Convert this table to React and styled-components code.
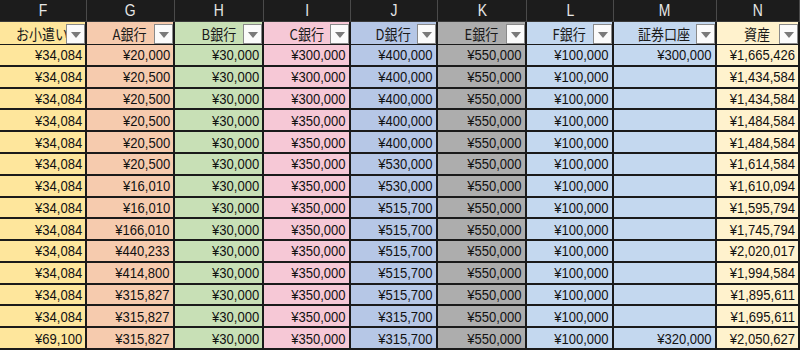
import styled, { createGlobalStyle } from "styled-components";

const GlobalStyle = createGlobalStyle`
  html, body {
    margin: 0;
    padding: 0;
    background: #ffffff;
  }
`;

const COLUMNS = [
  { key: "F", title: "お小遣い", bg: "#fee69c", width: 87 },
  { key: "G", title: "A銀行", bg: "#f6cbae", width: 88 },
  { key: "H", title: "B銀行", bg: "#c8e0b6", width: 89 },
  { key: "I", title: "C銀行", bg: "#f6c8d6", width: 87 },
  { key: "J", title: "D銀行", bg: "#b6c7e6", width: 87 },
  { key: "K", title: "E銀行", bg: "#adadad", width: 89 },
  { key: "L", title: "F銀行", bg: "#c4d8ef", width: 87 },
  { key: "M", title: "証券口座", bg: "#c4d8ef", width: 103 },
  { key: "N", title: "資産", bg: "#fff2cd", width: 83 },
];

const ROWS = [
  ["¥34,084", "¥20,000", "¥30,000", "¥300,000", "¥400,000", "¥550,000", "¥100,000", "¥300,000", "¥1,665,426"],
  ["¥34,084", "¥20,500", "¥30,000", "¥300,000", "¥400,000", "¥550,000", "¥100,000", "", "¥1,434,584"],
  ["¥34,084", "¥20,500", "¥30,000", "¥300,000", "¥400,000", "¥550,000", "¥100,000", "", "¥1,434,584"],
  ["¥34,084", "¥20,500", "¥30,000", "¥350,000", "¥400,000", "¥550,000", "¥100,000", "", "¥1,484,584"],
  ["¥34,084", "¥20,500", "¥30,000", "¥350,000", "¥400,000", "¥550,000", "¥100,000", "", "¥1,484,584"],
  ["¥34,084", "¥20,500", "¥30,000", "¥350,000", "¥530,000", "¥550,000", "¥100,000", "", "¥1,614,584"],
  ["¥34,084", "¥16,010", "¥30,000", "¥350,000", "¥530,000", "¥550,000", "¥100,000", "", "¥1,610,094"],
  ["¥34,084", "¥16,010", "¥30,000", "¥350,000", "¥515,700", "¥550,000", "¥100,000", "", "¥1,595,794"],
  ["¥34,084", "¥166,010", "¥30,000", "¥350,000", "¥515,700", "¥550,000", "¥100,000", "", "¥1,745,794"],
  ["¥34,084", "¥440,233", "¥30,000", "¥350,000", "¥515,700", "¥550,000", "¥100,000", "", "¥2,020,017"],
  ["¥34,084", "¥414,800", "¥30,000", "¥350,000", "¥515,700", "¥550,000", "¥100,000", "", "¥1,994,584"],
  ["¥34,084", "¥315,827", "¥30,000", "¥350,000", "¥515,700", "¥550,000", "¥100,000", "", "¥1,895,611"],
  ["¥34,084", "¥315,827", "¥30,000", "¥350,000", "¥315,700", "¥550,000", "¥100,000", "", "¥1,695,611"],
  ["¥69,100", "¥315,827", "¥30,000", "¥350,000", "¥315,700", "¥550,000", "¥100,000", "¥320,000", "¥2,050,627"],
];

const Sheet = styled.div`
  display: grid;
  grid-template-columns: ${COLUMNS.map((c) => `${c.width}px`).join(" ")};
  grid-template-rows: 22px 23px repeat(14, 1fr);
  width: 800px;
  height: 350px;
  overflow: hidden;
  background: #1a1a1a;
  font-family: "Liberation Sans", "Noto Sans CJK JP", sans-serif;
  color: #111;
`;

// the source glyphs are a bit narrower than Arial, so squeeze horizontally
const Squeeze = styled.span`
  display: inline-block;
  transform: scaleX(0.87);
  transform-origin: ${({ $origin }) => $origin || "center"};
`;

const ColLetter = styled.div`
  display: flex;
  align-items: center;
  justify-content: center;
  background: #1c1c1c;
  color: #e6e6e6;
  font-size: 16px;
  border-right: 1px solid #4a4a4a;
  border-bottom: 1px solid #3a3a3a;
  box-sizing: border-box;
`;

const FilterCell = styled.div`
  position: relative;
  display: flex;
  align-items: center;
  justify-content: center;
  background: ${({ $bg }) => $bg};
  font-family: "Noto Sans CJK JP", sans-serif;
  font-size: 15px;
  color: #1a1a1a;
  border-right: 2px solid #1a1a1a;
  border-bottom: 1px solid #1a1a1a;
  box-sizing: border-box;
  overflow: hidden;
  white-space: nowrap;
`;

const DropButton = styled.span`
  position: absolute;
  right: 0;
  bottom: 0;
  width: 19px;
  height: 20px;
  box-sizing: border-box;
  background: #fbfbfb;
  border: 1px solid #8a8a8a;
  display: flex;
  align-items: center;
  justify-content: center;

  &::after {
    content: "";
    width: 0;
    height: 0;
    border-left: 5px solid transparent;
    border-right: 5px solid transparent;
    border-top: 6px solid #7a7a7a;
    margin-top: 1px;
  }
`;

const Cell = styled.div`
  display: flex;
  align-items: center;
  justify-content: flex-end;
  padding-right: 3px;
  background: ${({ $bg }) => $bg};
  font-size: 15px;
  border-right: 2px solid #1a1a1a;
  border-bottom: 2px solid #1a1a1a;
  box-sizing: border-box;
  white-space: nowrap;
`;

export default function App() {
  return (
    <>
      <GlobalStyle />
      <Sheet>
        {COLUMNS.map((c) => (
          <ColLetter key={c.key}>
            <Squeeze>{c.key}</Squeeze>
          </ColLetter>
        ))}
        {COLUMNS.map((c) => (
          <FilterCell key={c.key} $bg={c.bg}>
            <Squeeze>{c.title}</Squeeze>
            <DropButton />
          </FilterCell>
        ))}
        {ROWS.map((row, r) =>
          row.map((v, i) => (
            <Cell key={`${r}-${i}`} $bg={COLUMNS[i].bg}>
              <Squeeze $origin="right center">{v}</Squeeze>
            </Cell>
          ))
        )}
      </Sheet>
    </>
  );
}
